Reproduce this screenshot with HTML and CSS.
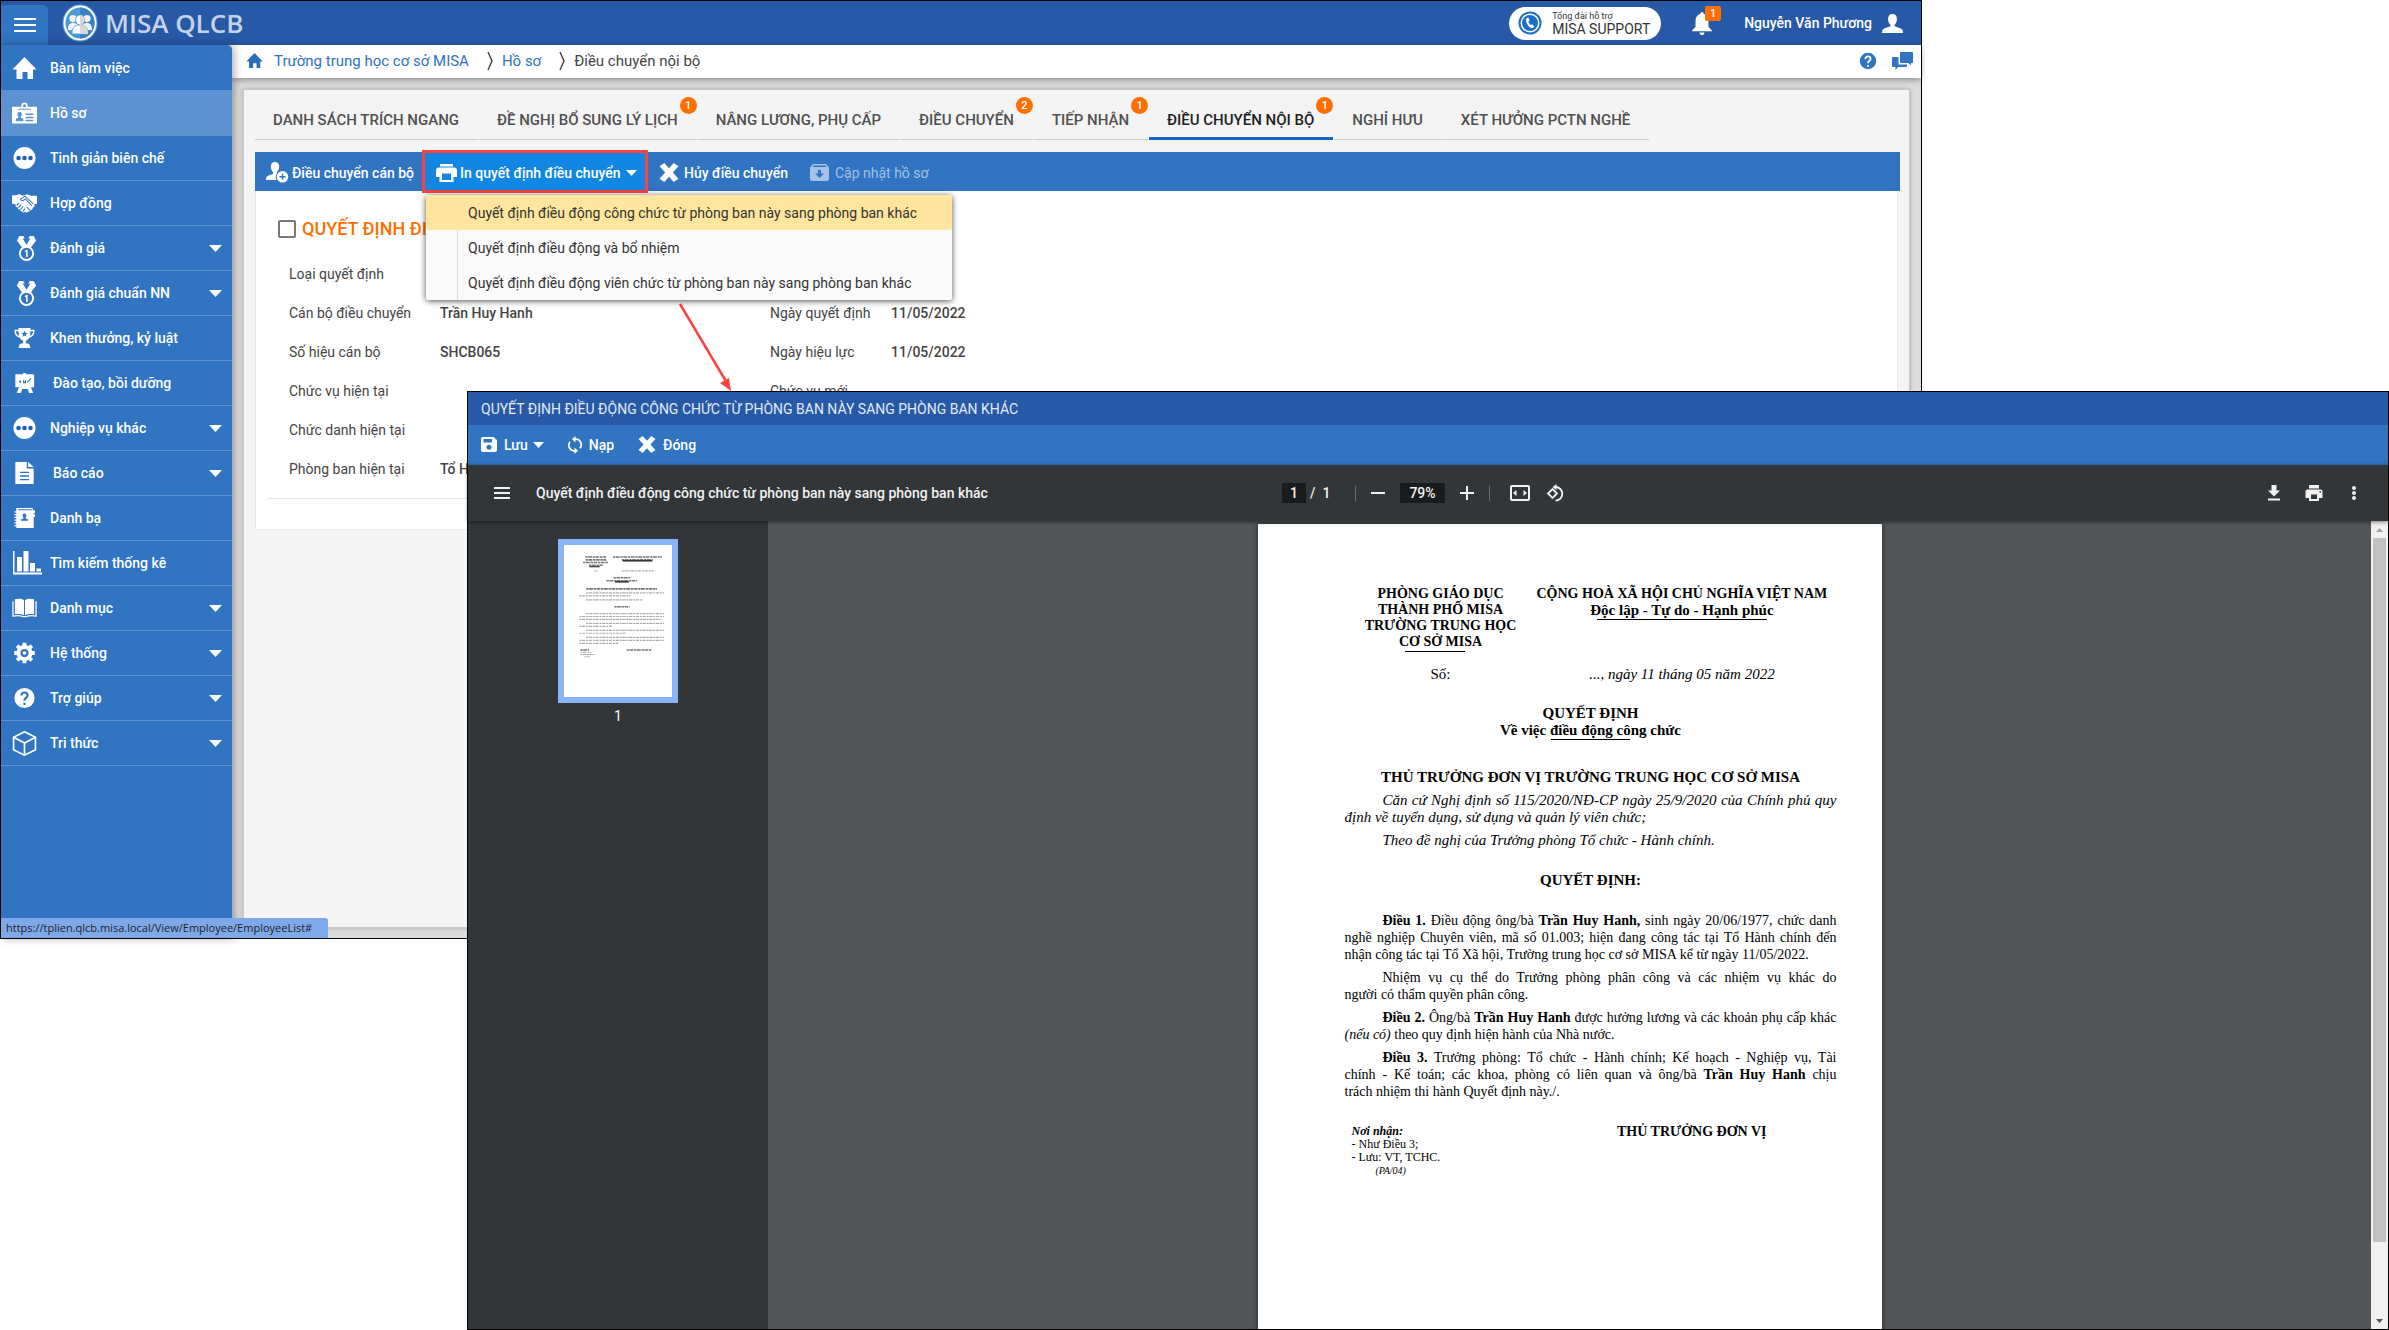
FILE: index.html
```html
<!DOCTYPE html>
<html lang="vi">
<head>
<meta charset="utf-8">
<meta name="viewport" content="width=device-width, initial-scale=1">
<title>MISA QLCB - Điều chuyển nội bộ</title>
<link rel="stylesheet" href="styles.css">
</head>
<body>
<svg class="sprite" aria-hidden="true">
  <symbol id="i-caret" viewBox="0 0 13 7"><path d="M0 0h13L6.500 7z"/></symbol>
  <symbol id="i-home" viewBox="0 0 24 22"><path d="M12 0 24 12.500h-3.500V22h-5.500v-7H10v7H4v-9.500H0z"/></symbol>
  <symbol id="i-dots" viewBox="0 0 24 24"><circle cx="12" cy="12" r="12"/><g fill="#1d5fb4"><circle cx="5.500" cy="12" r="2.500"/><circle cx="12" cy="12" r="2.500"/><circle cx="18.500" cy="12" r="2.500"/></g></symbol>
  <symbol id="i-medal" viewBox="0 0 20 26"><path d="M2.500 0h4.200l3.300 6 3.300-6h4.200L20 5l-5.500 7h-9L0 5z"/><path d="M6 2.500h8L10 9z" fill="#3074c2"/><circle cx="10" cy="18" r="6.900" fill="#3074c2" stroke="#fff" stroke-width="2"/><path d="M8 15.800l2-1.600h1.200v7.600H9.600v-5.600l-1 .6z"/></symbol>
  <symbol id="i-close" viewBox="0 0 20 20"><path d="M5 0 10 5.500 15 0l5 3.500L14 10l6 6.500L15 20l-5-5.500L5 20l-5-3.500L6 10 0 3.500z"/></symbol>
  <symbol id="i-help" viewBox="0 0 24 24"><path fill-rule="evenodd" d="M12 1a11 11 0 1 0 0 22 11 11 0 0 0 0-22zm-1.200 16.200h2.400v2.300h-2.400zM12 4.800c2.700 0 4.600 1.700 4.600 4.100 0 3-3.400 3.400-3.400 6.200h-2.400c0-4 3.300-4.100 3.300-6.200 0-1.100-.9-1.900-2.100-1.900s-2.200.8-2.200 2.200H7.400c0-2.700 2-4.400 4.600-4.400z"/></symbol>
  <symbol id="i-user" viewBox="0 0 22 20"><path d="M11 0c3 0 4.700 2 4.700 5.200 0 2.400-1 5-2.500 6.200v1.400l6 2.200c2 .8 2.800 2 2.800 4.200v.8H0v-.8C0 17 .8 15.800 2.800 15l6-2.200v-1.400C7.300 10.200 6.300 7.600 6.300 5.200 6.300 2 8 0 11 0z"/></symbol>
</svg>

<main class="desktop">
  <section class="app" aria-label="MISA QLCB">
    <header class="app-header">
      <button class="menu-toggle" aria-label="Menu"><svg width="24" height="16" viewBox="0 0 24 16"><path d="M1 2h22M1 8h22M1 14h22" stroke="#fff" stroke-width="2"/></svg></button>
      <svg class="brand-logo" width="36" height="38" viewBox="0 0 36 38">
        <ellipse cx="18" cy="19" rx="17" ry="18" fill="#fff" stroke="#5aa3dc"/>
        <ellipse cx="18" cy="19" rx="14.500" ry="15.500" fill="#4a9ad4"/>
        <path d="M18 3.500a14.500 15.500 0 0 1 0 31z" fill="#3b7fc6"/>
        <g fill="#f4f4f4"><circle cx="11" cy="14.500" r="3.600"/><circle cx="25" cy="14.500" r="3.600"/><path d="M6 26c0-5 1.500-6.500 5-7.500l5 2v6zM30 26c0-5-1.500-6.500-5-7.500l-5 2v6z"/></g>
        <g fill="#fff" stroke="#4a9ad4" stroke-width=".8"><path d="M10 30c0-6 2-8 5.500-9h5c3.500 1 5.500 3 5.500 9z"/><ellipse cx="18" cy="16" rx="4.500" ry="5"/></g>
        <path d="M18 11c2.500 0 4.500 2.200 4.500 5s-2 5-4.500 5v9h8c0-6-2-8-5.500-9H18z" fill="#d8d8d8"/>
      </svg>
      <span class="brand">MISA QLCB</span>
      <div class="header-tools">
        <a class="support" href="#">
          <svg width="24" height="24" viewBox="0 0 24 24"><circle cx="12" cy="12" r="10.500" fill="none" stroke="#1c6fc4" stroke-width="2"/><circle cx="12" cy="12" r="8" fill="#1c6fc4"/><path d="M8.400 7.200l1.900-.7 1.200 3-1.200 1c.5 1.500 1.300 2.600 2.500 3.500l1.300-.7 2.200 2.300-1.400 1.500c-3.600.3-7.900-5.400-6.500-9.900z" fill="#fff"/></svg>
          <span class="support-text"><small>Tổng đài hỗ trợ</small><span>MISA SUPPORT</span></span>
        </a>
        <button class="bell" aria-label="Thông báo"><svg width="20" height="24" viewBox="0 0 20 24"><path fill="#fff" d="M10 1c1 0 1.600.8 1.600 1.800C14.600 3.600 16.500 6.300 16.500 10v6L20 19.500v.8H0v-.8L3.500 16v-6c0-3.700 1.900-6.400 4.900-7.200C8.400 1.800 9 1 10 1zM7.500 21.400h5c0 1.500-1 2.600-2.500 2.600s-2.500-1.100-2.500-2.600z"/></svg><span class="bell-count">1</span></button>
        <button class="account">Nguyễn Văn Phương <svg width="21" height="19" fill="#fff"><use href="#i-user"/></svg></button>
      </div>
    </header>

    <div class="app-body">
      <nav class="sidebar">
        <ul class="nav">
          <li><a class="nav-item" href="#"><svg class="nav-icon"><use href="#i-home"/></svg>Bàn làm việc</a></li>
          <li><a class="nav-item nav-item--active" href="#"><svg class="nav-icon" viewBox="0 0 24 20"><path fill-rule="evenodd" d="M9 4V2.500Q9 0 12 0t3 2.500V4h9v16H0V4zm3-2.500q-1.500 0-1.500 1.500T12 4.500 13.500 3 12 1.500zM6 5.800v1h12v-1zM7 9a2 2.400 0 0 0-1 4.400v1.200c-2 .4-2.500 1.200-2.500 3.400H11c0-2.200-.5-3-2.500-3.400v-1.200A2 2.400 0 0 0 7 9zm6 1.500V12h7.500v-1.500zm0 3V15h7.500v-1.500zm0 3V18h7.500v-1.500z"/></svg>Hồ sơ</a></li>
          <li><a class="nav-item" href="#"><svg class="nav-icon"><use href="#i-dots"/></svg>Tinh giản biên chế</a></li>
          <li><a class="nav-item" href="#"><svg class="nav-icon nav-icon--tall" viewBox="0 0 27 20"><path d="M0 1h4l4-1 4 1.500L16 0l5 1.500H27v9h-3l.5 2.500-2 1.500-.5 2-2 .5-.5 1.500-2 .2L16 20l-2-1-1.500 1-2-1.500L9 18l-.5-1.500-2-.5-.5-2-2-.5L4 11 0 10z"/><path d="M9 5.500 14 2l9 8.500M9 5.500c1.500 2 3.500 1.500 5.500-.5l7 7.500M5 12l2.500-2.500M7 14.500 10 11M9 17l3-4M12 18.500l2-3M16 14l3.500 3.500" fill="none" stroke="#3074c2" stroke-width="1.100"/></svg>Hợp đồng</a></li>
          <li><a class="nav-item nav-item--medal" href="#"><svg class="nav-icon nav-icon--tall"><use href="#i-medal"/></svg>Đánh giá<svg class="nav-caret"><use href="#i-caret"/></svg></a></li>
          <li><a class="nav-item nav-item--medal" href="#"><svg class="nav-icon nav-icon--tall"><use href="#i-medal"/></svg>Đánh giá chuẩn NN<svg class="nav-caret"><use href="#i-caret"/></svg></a></li>
          <li><a class="nav-item" href="#"><svg class="nav-icon" viewBox="0 0 24 24"><path d="M5.500 1h13v2H23c0 5-1.500 7.500-5.500 8.500-1 2-2.500 3-4 3.500v3h2c1.500 0 2.500 1.500 3 5h-13c.5-3.500 1.500-5 3-5h2v-3c-1.500-.5-3-1.500-4-3.500C2.500 10.500 1 8 1 3h4.500z"/><path d="M2.500 4.500h3c0 2 .3 3.500.8 5-2.500-.8-3.600-2.500-3.800-5zM21.500 4.500h-3c0 2-.3 3.500-.8 5 2.500-.8 3.600-2.500 3.800-5zM12 4l1 2.300 2.500.2-2 1.600.7 2.400-2.200-1.300-2.200 1.300.7-2.400-2-1.600 2.500-.2z" fill="#3074c2"/></svg>Khen thưởng, kỷ luật</a></li>
          <li><a class="nav-item nav-item--inset" href="#"><svg class="nav-icon" viewBox="0 0 24 24"><path d="M10.500 1h3v1.500h9V16.500H19l2.500 6.500H17l-1.500-4.500h-6L8 23H3.500L6 16.500H2V2.500h8.500z"/><path d="M6 10l1.500 1 .5-1.500M11 9v2.500h2V9M15 11l4-4" fill="none" stroke="#3074c2" stroke-width="1.300"/></svg>Đào tạo, bồi dưỡng</a></li>
          <li><a class="nav-item" href="#"><svg class="nav-icon"><use href="#i-dots"/></svg>Nghiệp vụ khác<svg class="nav-caret"><use href="#i-caret"/></svg></a></li>
          <li><a class="nav-item nav-item--inset" href="#"><svg class="nav-icon" viewBox="0 0 24 24"><path fill-rule="evenodd" d="M2 0h12.500v7H22v17H2zM7 10.500V12h10v-1.500zm0 4V16h10v-1.500zm0 4V20h10v-1.500zM16 0 22 5.500h-6z"/></svg>Báo cáo<svg class="nav-caret"><use href="#i-caret"/></svg></a></li>
          <li><a class="nav-item" href="#"><svg class="nav-icon" viewBox="0 0 24 24"><path fill-rule="evenodd" d="M3 1h18v2.500h2.500v3H22V8h1.500v3H22v12H3v-2H1v-1.500h2V18H1v-1.500h2V15H1v-1.500h2V12H1v-1.500h2V9H1V7.500h2V6H1V4.500h2zm2 1.500v1h15v-1zM12 7a2 2.300 0 0 0-1.200 4.200V12.500L8 13.500V15h8v-1.500l-2.800-1v-1.300A2 2.300 0 0 0 12 7z"/></svg>Danh bạ</a></li>
          <li><a class="nav-item nav-item--chart" href="#"><svg class="nav-icon" viewBox="0 0 30 24"><path d="M1 0h1.500v21.500H30V23.500H1z"/><path d="M5 6h5v14.500H5zM11.500 0h5v20.500h-5zM18 12h5v8.500h-5zM24.500 17.500H29v3h-4.500z"/></svg>Tìm kiếm thống kê</a></li>
          <li><a class="nav-item" href="#"><svg class="nav-icon" viewBox="0 0 26 20"><path d="M3 1c4-1 7-.8 9.500 1v15.500C10 16 7 15.800 3 16.500zM23 1c-4-1-7-.8-9.500 1v15.500c2.500-1.500 5.500-1.700 9.500-1z"/><path d="M1 3v15.500c4-.9 8-.6 10 .4h4c2-1 6-1.300 10-.4V3" fill="none" stroke="#fff" stroke-width="1.300"/></svg>Danh mục<svg class="nav-caret"><use href="#i-caret"/></svg></a></li>
          <li><a class="nav-item" href="#"><svg class="nav-icon" viewBox="0 0 24 24"><circle cx="12" cy="12" r="6.200" fill="none" stroke="#fff" stroke-width="5"/><path d="M12 .8v22.400M.8 12h22.400M4 4l16 16M20 4 4 20" stroke="#fff" stroke-width="4.200" fill="none"/><circle cx="12" cy="12" r="4.500" fill="#3074c2"/><circle cx="12" cy="12" r="2"/></svg>Hệ thống<svg class="nav-caret"><use href="#i-caret"/></svg></a></li>
          <li><a class="nav-item" href="#"><svg class="nav-icon"><use href="#i-help"/></svg>Trợ giúp<svg class="nav-caret"><use href="#i-caret"/></svg></a></li>
          <li><a class="nav-item" href="#"><svg class="nav-icon nav-icon--tall" viewBox="0 0 24 24"><path d="M12 .8 22.500 6v12L12 23.200 1.500 18V6zM1.500 6 12 11.500 22.500 6M12 11.500V23" fill="none" stroke="#fff" stroke-width="1.600"/></svg>Tri thức<svg class="nav-caret"><use href="#i-caret"/></svg></a></li>
        </ul>
      </nav>

      <div class="workspace">
        <div class="crumb-bar">
          <nav class="crumbs" aria-label="Đường dẫn">
            <svg class="crumb-home" width="17" height="15" fill="#2b6cb8" viewBox="0 0 24 22"><use href="#i-home" width="24" height="22"/></svg>
            <a href="#">Trường trung học cơ sở MISA</a>
            <svg width="6" height="20" viewBox="0 0 6 20"><path d="M1 1l4 9-4 9" fill="none" stroke="#333" stroke-width="1.300"/></svg>
            <a href="#">Hồ sơ</a>
            <svg width="6" height="20" viewBox="0 0 6 20"><path d="M1 1l4 9-4 9" fill="none" stroke="#333" stroke-width="1.300"/></svg>
            <span>Điều chuyển nội bộ</span>
          </nav>
          <div class="crumb-tools">
            <button aria-label="Trợ giúp"><svg width="18" height="18" fill="#3074c2"><use href="#i-help"/></svg></button>
            <button aria-label="Trao đổi"><svg width="21" height="18" viewBox="0 0 21 18"><path fill="#3074c2" d="M9 0h11q1 0 1 1v9q0 1-1 1h-1v2.500L16.500 11H9q-1 0-1-1V1q0-1 1-1zM1 5h5.500v7.500H15V14q0 1-1 1H6L3.500 18v-3H1q-1 0-1-1V6q0-1 1-1z"/></svg></button>
          </div>
        </div>

        <div class="panel">
          <nav class="tabs">
            <a href="#">DANH SÁCH TRÍCH NGANG</a>
            <a href="#">ĐỀ NGHỊ BỔ SUNG LÝ LỊCH<span class="badge">1</span></a>
            <a href="#">NÂNG LƯƠNG, PHỤ CẤP</a>
            <a href="#">ĐIỀU CHUYỂN<span class="badge">2</span></a>
            <a href="#">TIẾP NHẬN<span class="badge">1</span></a>
            <a class="tab--active" href="#" aria-current="page">ĐIỀU CHUYỂN NỘI BỘ<span class="badge">1</span></a>
            <a href="#">NGHỈ HƯU</a>
            <a href="#">XÉT HƯỞNG PCTN NGHỀ</a>
          </nav>

          <div class="toolbar">
            <button><svg width="23" height="21" viewBox="0 0 23 21"><path fill="#fff" d="M9 0c2.700 0 4.200 1.800 4.200 4.600 0 2.200-.9 4.300-2.200 5.400v1.500c-1.500 1.500-1.500 4-.5 6.500H0c0-2.600.6-3.800 2.500-4.500L7 12v-2C5.700 8.900 4.800 6.800 4.800 4.600 4.800 1.800 6.300 0 9 0z"/><circle cx="16.500" cy="14.800" r="5.800" fill="#fff"/><path d="M13.500 14.800h6M16.500 11.800v6" stroke="#3074c2" stroke-width="1.400"/></svg>Điều chuyển cán bộ</button>
            <div class="dropdown">
              <button class="dropdown-toggle" aria-expanded="true"><svg width="21" height="18" viewBox="0 0 21 18"><path fill="#fff" d="M4 0h13v2.500H4zM3 3.500h15q3 0 3 3V13h-3.500v5h-14v-5H0V6.500q0-3 3-3z"/><path d="M6 9.500h9v6.500H6z" fill="#1187e3"/></svg>In quyết định điều chuyển<svg class="caret" width="11" height="6"><use href="#i-caret"/></svg></button>
              <ul class="menu">
                <li><button class="menu-item menu-item--active">Quyết định điều động công chức từ phòng ban này sang phòng ban khác</button></li>
                <li><button class="menu-item">Quyết định điều động và bổ nhiệm</button></li>
                <li><button class="menu-item">Quyết định điều động viên chức từ phòng ban này sang phòng ban khác</button></li>
              </ul>
            </div>
            <button class="cancel"><svg width="20" height="19" fill="#fff"><use href="#i-close"/></svg>Hủy điều chuyển</button>
            <button class="update" disabled><svg width="19" height="17" viewBox="0 0 19 17"><path fill="#a3c2e5" fill-rule="evenodd" d="M3 0h13l3 3.500V15q0 2-2 2H2q-2 0-2-2V3.500zM3.500 1.500 2.500 3h14l-1-1.500zM8 6v3.500H5L9.500 14 14 9.500h-3V6z"/></svg>Cập nhật hồ sơ</button>
          </div>

          <div class="card">
            <label class="card-title"><input type="checkbox"> QUYẾT ĐỊNH ĐIỀU CHUYỂN</label>
            <dl class="fields">
              <dt>Loại quyết định</dt><dd></dd><dt></dt><dd></dd>
              <dt>Cán bộ điều chuyển</dt><dd>Trần Huy Hanh</dd><dt>Ngày quyết định</dt><dd>11/05/2022</dd>
              <dt>Số hiệu cán bộ</dt><dd>SHCB065</dd><dt>Ngày hiệu lực</dt><dd>11/05/2022</dd>
              <dt>Chức vụ hiện tại</dt><dd></dd><dt>Chức vụ mới</dt><dd></dd>
              <dt>Chức danh hiện tại</dt><dd></dd><dt></dt><dd></dd>
              <dt>Phòng ban hiện tại</dt><dd>Tổ Hành chính</dd><dt></dt><dd></dd>
            </dl>
          </div>
        </div>
      </div>
    </div>
    <div class="status-url">https://tplien.qlcb.misa.local/View/Employee/EmployeeList#</div>
  </section>

  <svg class="arrow" width="56" height="92" viewBox="0 0 56 92"><path d="M2 2 49 81" stroke="#fc4343" stroke-width="2.500"/><path d="M53 89 42 81l9-5z" fill="#fc4343"/></svg>

  <section class="dialog" role="dialog" aria-labelledby="dialog-title">
    <h1 class="dialog-title" id="dialog-title">QUYẾT ĐỊNH ĐIỀU ĐỘNG CÔNG CHỨC TỪ PHÒNG BAN NÀY SANG PHÒNG BAN KHÁC</h1>
    <div class="dialog-tools">
      <button><svg width="16" height="15" viewBox="0 0 16 15"><path fill="#fff" fill-rule="evenodd" d="M2 0h10.500L16 3v10q0 2-2 2H2q-2 0-2-2V2q0-2 2-2zm.5 2v3.500H11V2zM8 7.800a2.500 2.500 0 1 0 .01 0z"/></svg>Lưu<svg class="caret" width="11" height="6"><use href="#i-caret"/></svg></button>
      <button><svg width="14" height="18" viewBox="0 0 14 18"><path d="M6 3.200h2a5 5.500 0 0 1 4 9M8 14.800H6a5 5.500 0 0 1-4-9" fill="none" stroke="#fff" stroke-width="1.700"/><path d="M4 3.200 7.500 0v6.400zM10 14.800 6.500 18v-6.400z" fill="#fff"/></svg>Nạp</button>
      <button><svg width="18" height="17" fill="#fff"><use href="#i-close"/></svg>Đóng</button>
    </div>

    <div class="viewer">
      <div class="viewer-bar">
        <div class="viewer-name">
          <button aria-label="Hình thu nhỏ"><svg width="16" height="12" viewBox="0 0 16 12"><path d="M0 1h16M0 6h16M0 11h16" stroke="#f1f1f1" stroke-width="2"/></svg></button>
          <span>Quyết định điều động công chức từ phòng ban này sang phòng ban khác</span>
        </div>
        <div class="viewer-controls">
          <input class="page-no" aria-label="Trang" value="1"><span class="page-total">/&nbsp; 1</span>
          <i class="rule"></i>
          <button aria-label="Thu nhỏ"><svg width="14" height="14" viewBox="0 0 14 14"><path d="M0 7h14" stroke="#f1f1f1" stroke-width="2"/></svg></button>
          <input class="zoom" aria-label="Thu phóng" value="79%">
          <button aria-label="Phóng to"><svg width="14" height="14" viewBox="0 0 14 14"><path d="M0 7h14M7 0v14" stroke="#f1f1f1" stroke-width="2"/></svg></button>
          <i class="rule"></i>
          <button class="fit" aria-label="Vừa trang"><svg width="20" height="16" viewBox="0 0 20 16"><rect x="1" y="1" width="18" height="14" rx="1" fill="none" stroke="#f1f1f1" stroke-width="2"/><path d="M6.500 5v6L3 8zM13.500 5v6L17 8z" fill="#f1f1f1"/></svg></button>
          <button aria-label="Xoay"><svg width="20" height="18" viewBox="0 0 20 18"><path d="M6.500 5 11 9.500 6.500 14 2 9.500z" fill="none" stroke="#f1f1f1" stroke-width="1.800"/><path d="M9.500 3a6.800 6.800 0 1 1 0 13.600" fill="none" stroke="#f1f1f1" stroke-width="1.800"/><path d="M6.500 3 10.500 0v6z" fill="#f1f1f1"/></svg></button>
        </div>
        <div class="viewer-actions">
          <button aria-label="Tải xuống"><svg width="24" height="24" viewBox="0 0 24 24"><path fill="#f1f1f1" d="M9.500 4h5v5.500H18L12 15.500 6 9.500h3.500zM6 17.500h12v2H6z"/></svg></button>
          <button aria-label="In"><svg width="24" height="24" viewBox="0 0 24 24"><path fill="#f1f1f1" fill-rule="evenodd" d="M7 4h10v3.500H7zM5.500 8.500h13q2 0 2 2V17H17v3H7v-3H3.500v-6.500q0-2 2-2zM9 13.500V18h6v-4.500zM17.500 10v1.500H19V10z"/></svg></button>
          <button aria-label="Thêm"><svg width="24" height="24" viewBox="0 0 24 24" fill="#f1f1f1"><circle cx="12" cy="7" r="2"/><circle cx="12" cy="12" r="2"/><circle cx="12" cy="17" r="2"/></svg></button>
        </div>
      </div>

      <aside class="thumbs">
        <button class="thumb" aria-label="Trang 1">
          <svg width="108" height="152" viewBox="0 0 624 880" fill="none">
            <g stroke-width="9" stroke-dasharray="14 3 22 4" stroke="#777"><path d="M122 70h122M124 86h120M110 101h146M144 117h80M283 70h284M334 86h180M286 190h96M245 207h178M128 254h410M290 357h90M362 608h146M94 608h52"/></g>
            <g stroke-width="7" stroke="#111"><path d="M340 92h170M146 126h60M295 213h80"/></g>
            <g stroke-width="7" stroke-dasharray="11 4 19 5" stroke="#aaa"><path d="M174 150h20M334 150h184M127 277h452M88 295h296M127 318h330M127 397h452M88 414h490M88 431h474M127 454h452M88 471h192M127 494h452M88 511h270M127 535h452M88 552h490M88 569h226M94 621h64M94 634h86M118 647h30"/></g>
          </svg>
        </button>
        <span>1</span>
      </aside>

      <div class="canvas">
        <article class="paper">
          <div class="letterhead">
            <p class="org">PHÒNG GIÁO DỤC<br>THÀNH PHỐ MISA<br>TRƯỜNG TRUNG HỌC<br>CƠ SỞ MISA</p>
            <p class="nation">CỘNG HOÀ XÃ HỘI CHỦ NGHĨA VIỆT NAM<br><span class="motto">Độc lập - Tự do - Hạnh phúc</span></p>
            <p class="number">Số:</p>
            <p class="date">..., ngày 11 tháng 05 năm 2022</p>
          </div>
          <h2 class="doc-title">QUYẾT ĐỊNH<br>Về việc điều động công chức</h2>
          <h3 class="doc-heading">THỦ TRƯỞNG ĐƠN VỊ TRƯỜNG TRUNG HỌC CƠ SỞ MISA</h3>
          <p class="para para--basis"><span>Căn cứ Nghị định số 115/2020/NĐ-CP ngày 25/9/2020 của Chính phủ quy</span> <span>định về tuyển dụng, sử dụng và quản lý viên chức;</span></p>
          <p class="para para--basis"><span>Theo đề nghị của Trưởng phòng Tổ chức - Hành chính.</span></p>
          <h3 class="doc-decision">QUYẾT ĐỊNH:</h3>
          <p class="para"><span><b>Điều 1.</b> Điều động ông/bà <b>Trần Huy Hanh,</b> sinh ngày 20/06/1977, chức danh</span> <span>nghề nghiệp Chuyên viên, mã số 01.003; hiện đang công tác tại Tổ Hành chính đến</span> <span>nhận công tác tại Tổ Xã hội, Trường trung học cơ sở MISA kể từ ngày 11/05/2022.</span></p>
          <p class="para"><span>Nhiệm vụ cụ thể do Trưởng phòng phân công và các nhiệm vụ khác do</span> <span>người có thẩm quyền phân công.</span></p>
          <p class="para"><span><b>Điều 2.</b> Ông/bà <b>Trần Huy Hanh</b> được hưởng lương và các khoản phụ cấp khác</span> <span><em>(nếu có)</em> theo quy định hiện hành của Nhà nước.</span></p>
          <p class="para"><span><b>Điều 3.</b> Trưởng phòng: Tổ chức - Hành chính; Kế hoạch - Nghiệp vụ, Tài</span> <span>chính - Kế toán; các khoa, phòng có liên quan và ông/bà <b>Trần Huy Hanh</b> chịu</span> <span>trách nhiệm thi hành Quyết định này./.</span></p>
          <footer class="sign">
            <div class="recipients"><b>Nơi nhận:</b><span>- Như Điều 3;</span><span>- Lưu: VT, TCHC.</span><small>(PA/04)</small></div>
            <strong>THỦ TRƯỞNG ĐƠN VỊ</strong>
          </footer>
        </article>
      </div>

      <div class="scrollbar" aria-hidden="true">
        <svg width="17" height="17" viewBox="0 0 17 17"><path d="M5 11h7L8.500 7z" fill="#a3a3a3"/></svg>
        <i class="scroll-thumb"></i>
        <svg width="17" height="17" viewBox="0 0 17 17"><path d="M5 7h7l-3.500 4z" fill="#505050"/></svg>
      </div>
    </div>
  </section>
</main>
</body>
</html>
```
FILE: styles.css
```css
:root {
  --navy: #2759a7;
  --blue: #3074c2;
  --orange: #ff6f00;
  --dark: #323639;
  --text: #444;
}

* { box-sizing: border-box; }

body {
  margin: 0;
  background: #fff;
  color: var(--text);
  font: 14px/20px Roboto, "Noto Sans", sans-serif;
}

button, input { font: inherit; color: inherit; }
button { border: 0; padding: 0; background: none; display: inline-flex; align-items: center; cursor: pointer; }
a { color: inherit; text-decoration: none; }
ul, dl, p, h1, h2, h3 { margin: 0; padding: 0; }
ul { list-style: none; }
svg { display: block; flex: none; }
.sprite { position: absolute; width: 0; height: 0; }

/* Two overlapping windows */
.desktop { position: relative; height: 100vh; min-height: 1100px; overflow: hidden; }

.app {
  position: absolute;
  inset: 0 467px 391px 0;
  border: 1px solid #000;
  display: flex;
  flex-direction: column;
}

/* Header */
.app-header { height: 44px; flex: none; display: flex; align-items: center; background: var(--navy); color: #fff; }
.menu-toggle { align-self: stretch; width: 47px; margin-top: 4px; justify-content: center; background: var(--blue); border-top-right-radius: 5px; }
.brand-logo { margin-left: 14px; }
.brand { margin-left: 7px; color: #c3d3ec; font: 600 26px/32px "Open Sans", sans-serif; white-space: nowrap; }
.header-tools { margin-left: auto; display: flex; align-items: center; padding-right: 18px; }
.support { width: 152px; height: 33px; padding-left: 9px; display: flex; align-items: center; gap: 10px; border-radius: 17px; background: #fff; color: #333; }
.support-text { display: flex; flex-direction: column; line-height: 14px; white-space: nowrap; }
.support-text small { font-size: 9px; line-height: 12px; }
.bell { position: relative; margin-left: 31px; }
.bell-count { position: absolute; left: 13px; top: -5px; width: 16px; height: 15px; border-radius: 2px; background: var(--orange); font: 500 11px/15px Roboto, sans-serif; text-align: center; }
.account { margin-left: 32px; gap: 10px; font-weight: 500; white-space: nowrap; }

/* Sidebar */
.app-body { flex: 1; min-height: 0; display: flex; }
.sidebar { width: 231px; flex: none; padding-top: 1px; background: var(--blue); border-top-right-radius: 5px; box-shadow: 2px 0 8px rgba(0, 0, 0, .35); z-index: 1; }
.nav-item { height: 45px; padding: 0 10px 0 11px; display: flex; align-items: center; gap: 13px; border-bottom: 1px solid #5b92d0; color: #fff; fill: #fff; font-weight: 500; white-space: nowrap; }
.nav-item--active { background: #5c92d1; }
.nav-item--inset { gap: 16px; }
.nav-icon { width: 25px; height: 22px; }
.nav-icon--tall { height: 25px; }
.nav-item--medal { padding-left: 13px; gap: 11px; }
.nav-item--chart { gap: 8px; }
.nav-item--chart .nav-icon { width: 30px; height: 24px; }
.nav-caret { width: 13px; height: 7px; margin-left: auto; }

/* Workspace */
.workspace { flex: 1; min-width: 0; display: flex; flex-direction: column; background: #dcdcdc; }
.crumb-bar { height: 33px; flex: none; padding: 0 8px 2px 14px; display: flex; align-items: center; justify-content: space-between; background: #fff; box-shadow: 0 2px 6px rgba(0, 0, 0, .35); }
.crumbs { display: flex; align-items: center; font-size: 15px; white-space: nowrap; }
.crumbs a { color: #2f72c0; }
.crumb-home { margin-right: 11px; }
.crumbs a + svg { margin: 0 9px 0 18px; }
.crumb-tools { display: flex; gap: 15px; }

.panel { flex: 1; margin: 11px 11px 10px; padding: 10px 9px 0 11px; background: #f4f4f4; border: 1px solid #c9c9c9; box-shadow: 0 0 4px rgba(0, 0, 0, .25); }

.tabs { display: flex; gap: 1px; height: 40px; white-space: nowrap; font-size: 15px; font-weight: 500; color: #505050; }
.tabs a { position: relative; padding: 8px 19px 0 18px; line-height: 24px; border-bottom: 1px solid #ccc; }
.tabs .tab--active { border-bottom: 3px solid #1565c0; color: #222; }
.badge { position: absolute; right: 0; top: -3px; width: 17px; height: 17px; border-radius: 50%; background: var(--orange); color: #fff; font-size: 11px; line-height: 17px; text-align: center; }

.toolbar { height: 39px; margin-top: 12px; padding-left: 11px; display: flex; background: var(--blue); color: #fff; font-weight: 500; white-space: nowrap; }
.toolbar > button, .dropdown-toggle { height: 39px; gap: 3px; padding-top: 2px; }
.caret { fill: #fff; margin-left: 2px; }
.dropdown { position: relative; margin-left: 10px; }
.dropdown-toggle { width: 222px; padding-left: 12px; background: #1187e3; outline: 3px solid #fc4343; outline-offset: -1px; }
.toolbar .cancel { margin-left: 13px; gap: 5px; }
.toolbar .update { margin-left: 22px; gap: 6px; color: #a3c2e5; font-weight: 400; }

.menu { position: absolute; left: 2px; top: 43px; width: 526px; z-index: 2; border-radius: 3px; background: linear-gradient(90deg, #fafafa 31px, #dcdcdc 31px, #dcdcdc 32px, #fafafa 32px); box-shadow: 0 1px 6px rgba(0, 0, 0, .7); font-weight: 400; color: #333; }
.menu-item { width: 100%; height: 35px; padding-left: 42px; border-radius: 3px; }
.menu-item--active { background: #ffe59d; }

.card { margin-right: 2px; padding: 13px 11px 30px; background: #fff; border: 1px solid #e8e8e8; border-top: 0; }
.card-title { height: 50px; padding-left: 11px; display: flex; align-items: center; gap: 6px; color: var(--orange); font-size: 18px; font-weight: 500; }
.card-title input { appearance: none; width: 18px; height: 18px; margin: 0; border: 2px solid #777; border-radius: 2px; background: #fff; }
.fields { padding: 0 0 10px 22px; display: grid; grid-template-columns: 151px 330px 121px 1fr; grid-auto-rows: 39px; align-items: center; border-bottom: 1px solid #e6e6e6; }
.fields dd { margin: 0; font-weight: 500; }

.status-url { position: absolute; left: 0; bottom: 0; z-index: 2; height: 20px; padding: 0 16px 0 5px; border-top-right-radius: 3px; background: #7fa8ea; color: #222; font: 11px/20px "Open Sans", sans-serif; }

.arrow { position: absolute; left: 678px; top: 302px; }

/* Preview dialog */
.dialog { position: absolute; inset: 391px 0 0 467px; border: 1px solid #000; display: flex; flex-direction: column; background: var(--dark); color: #fff; }
.dialog-title { height: 33px; flex: none; padding-left: 13px; background: var(--navy); color: #e3eaf5; font-size: 14px; font-weight: 400; line-height: 34px; }
.dialog-tools { height: 40px; flex: none; padding: 0 0 1px 13px; display: flex; gap: 24px; background: var(--blue); font-weight: 500; }
.dialog-tools button { gap: 7px; }
.dialog-tools .caret { margin-left: -2px; }

.viewer { flex: 1; min-height: 0; display: grid; grid-template: 56px 1fr / 300px 1fr 17px; }
.viewer-bar { grid-column: 1 / -1; z-index: 1; padding: 0 22px 0 14px; display: grid; grid-template-columns: 1fr auto 1fr; align-items: center; background: var(--dark); box-shadow: 0 1px 4px rgba(0, 0, 0, .5); color: #f1f1f1; font-weight: 500; }
.viewer-name { display: flex; align-items: center; gap: 26px; padding-left: 12px; white-space: nowrap; }
.viewer-controls { display: flex; align-items: center; }
.viewer-controls input { height: 20px; padding: 0; border: 0; background: #191b1c; color: #f1f1f1; text-align: center; }
.page-no { width: 24px; }
.page-total { margin-left: 4px; width: 45px; }
.rule { width: 1px; height: 15px; background: #6b6e70; }
.viewer-controls .rule + button { margin: 0 15px; }
.zoom { width: 45px; margin-right: 15px; }
.viewer-controls button + .rule { margin-left: 15px; }
.viewer-controls .rule + .fit { margin: 0 16px 0 20px; }
.viewer-actions { justify-self: end; display: flex; gap: 16px; }

.thumbs { display: flex; flex-direction: column; align-items: center; padding: 18px 0 0; gap: 3px; background: var(--dark); }
.thumb { padding: 6px; background: #8ab4f8; }
.thumb svg { background: #fff; }

.canvas { overflow: hidden; background: #525659; padding-top: 3px; }
.scrollbar { display: flex; flex-direction: column; background: #f1f1f1; }
.scroll-thumb { flex: 1; margin: 0 2px 70px; background: #c1c1c1; }

/* Printed decision: every line keeps the break it has on paper */
.paper { width: 624px; height: 882px; margin: 0 auto; padding: 62px 45px 0 87px; background: #fff; color: #000; box-shadow: 0 0 5px rgba(0, 0, 0, .6); font: 14px/17px "Liberation Serif", serif; }
.letterhead { display: grid; grid-template-columns: 192px 1fr; row-gap: 16px; margin-right: 12px; text-align: center; white-space: nowrap; font-size: 15px; line-height: 16px; }
.org, .nation { font-weight: bold; font-size: 14px; position: relative; }
.motto { font-size: 15px; }
.org::after, .nation::after, .doc-title::after { content: ""; position: absolute; height: 1px; background: #000; }
.org::after { left: 60px; bottom: -2px; width: 60px; }
.nation::after { left: 60px; top: 33px; width: 170px; }
.date { font-style: italic; }
.doc-title, .doc-heading, .doc-decision { font-size: 15px; line-height: 17px; font-weight: bold; text-align: center; white-space: nowrap; }
.doc-title { position: relative; margin-top: 23px; }
.doc-title::after { left: 206px; bottom: -1px; width: 79px; }
.doc-heading { margin-top: 30px; }
.doc-decision { margin: 23px 0; }
.para { margin-top: 6px; }
.para > span { display: block; white-space: nowrap; text-align-last: justify; }
.para > span:first-child { padding-left: 38px; }
.para > span:last-child { text-align-last: left; }
.para--basis { font-size: 15px; font-style: italic; }
.sign { margin: 23px 70px 0 7px; display: flex; justify-content: space-between; line-height: 17px; font-size: 14px; }
.recipients { display: flex; flex-direction: column; font-size: 12px; line-height: 13px; padding-top: 2px; }
.recipients b { font-style: italic; }
.recipients small { font-size: 10px; font-style: italic; padding-left: 24px; }
```
